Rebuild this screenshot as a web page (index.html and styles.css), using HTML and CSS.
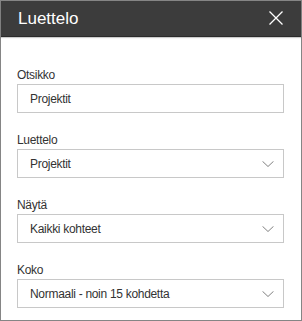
FILE: index.html
```html
<!DOCTYPE html>
<html lang="fi">

<head>
    <meta charset="UTF-8" />
    <meta name="viewport" content="width=device-width, initial-scale=1.0" />
    <title>Luettelo</title>
    <link rel="stylesheet" href="styles.css">
</head>

<body>
    <div class="panel">
        <div class="panel-header">
            <h1>Luettelo</h1>
            <button class="close-btn" aria-label="Sulje">
                <svg width="14" height="14" viewBox="0 0 14 14">
                    <path d="M0.5 0.5 L13.5 13.5 M13.5 0.5 L0.5 13.5" stroke="#fff" stroke-width="1.3" fill="none" />
                </svg>
            </button>
        </div>

        <div class="panel-body">
            <div class="field">
                <label for="title">Otsikko</label>
                <div class="box">
                    <span class="value" id="title">Projektit</span>
                </div>
            </div>
            <div class="field">
                <label>Luettelo</label>
                <div class="box dropdown">
                    <span class="value">Projektit</span>
                    <svg class="chevron" width="12" height="6" viewBox="0 0 12 6">
                        <path d="M0.5 0.3 L6 5.5 L11.5 0.3" stroke="#808080" stroke-width="1" fill="none" />
                    </svg>
                </div>
            </div>
            <div class="field">
                <label>Näytä</label>
                <div class="box dropdown">
                    <span class="value">Kaikki kohteet</span>
                    <svg class="chevron" width="12" height="6" viewBox="0 0 12 6">
                        <path d="M0.5 0.3 L6 5.5 L11.5 0.3" stroke="#808080" stroke-width="1" fill="none" />
                    </svg>
                </div>
            </div>
            <div class="field">
                <label>Koko</label>
                <div class="box dropdown">
                    <span class="value">Normaali - noin 15 kohdetta</span>
                    <svg class="chevron" width="12" height="6" viewBox="0 0 12 6">
                        <path d="M0.5 0.3 L6 5.5 L11.5 0.3" stroke="#808080" stroke-width="1" fill="none" />
                    </svg>
                </div>
            </div>
        </div>
    </div>
</body>

</html>
```

FILE: styles.css
```css
body {
    margin: 0;
    padding: 0;
    font-family: "Segoe UI", "Liberation Sans", sans-serif;
    background-color: #fff;
}

.panel {
    width: 302px;
    height: 321px;
    box-sizing: border-box;
    border: 1px solid #858585;
    background: #fff;
}

.panel-header {
    display: flex;
    align-items: center;
    justify-content: space-between;
    height: 35px;
    padding: 0 18px 0 17px;
    background-color: #3c3c3c;
    border-bottom: 1px solid #2b2b2b;
    box-shadow: 0 1px 1px rgba(0, 0, 0, 0.2);
}

.panel-header h1 {
    margin: 0;
    font-size: 17px;
    font-weight: normal;
    color: #fff;
}

.close-btn {
    display: flex;
    padding: 0;
    margin-top: -1px;
    background: none;
    border: none;
    cursor: pointer;
}

.panel-body {
    padding: 29px 17px 0 16px;
    display: flex;
    flex-direction: column;
    gap: 18px;
}

.field {
    display: flex;
    flex-direction: column;
}

label {
    font-size: 12px;
    letter-spacing: -0.3px;
    line-height: 18px;
    color: #333;
}

.box {
    display: flex;
    align-items: center;
    justify-content: space-between;
    height: 29px;
    box-sizing: border-box;
    padding: 0 9px 0 12px;
    border: 1px solid #c8c8c8;
    background: #fff;
}

.value {
    font-size: 12px;
    letter-spacing: -0.3px;
    color: #333;
}

.chevron {
    display: block;
}
```
